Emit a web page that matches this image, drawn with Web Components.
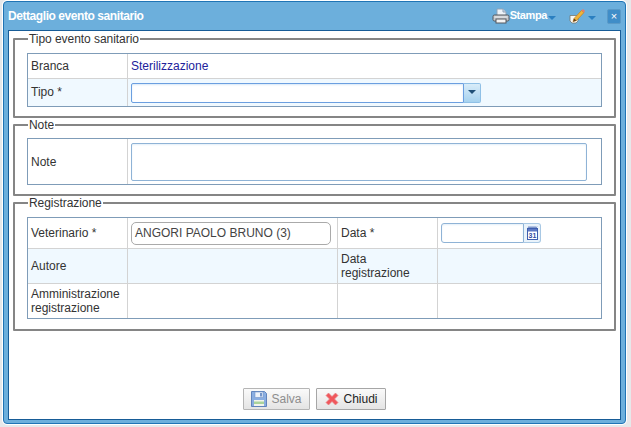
<!DOCTYPE html>
<html>
<head>
<meta charset="utf-8">
<title>Dettaglio evento sanitario</title>
<style>
html, body { margin: 0; padding: 0; height: 427px; overflow: hidden; }
body { background: #e6e8ea; font: 12px/14px "Liberation Sans", Arial, sans-serif; color: #333; }
</style>
</head>
<body>
<app-window heading="Dettaglio evento sanitario">
  <tool-button slot="tools" label="Stampa" icon="print"></tool-button>
  <tool-button slot="tools" icon="edit"></tool-button>

  <form-section legend="Tipo evento sanitario">
    <form-grid style="--cols: 100px 473px">
      <form-cell label style="height:24px">Branca</form-cell>
      <form-cell last-col style="height:24px"><span style="color:#22229c">Sterilizzazione</span></form-cell>
      <form-cell label alt last-row style="height:25px;padding-bottom:2px">Tipo *</form-cell>
      <form-cell alt last-col last-row style="height:27px"><combo-box></combo-box></form-cell>
    </form-grid>
  </form-section>

  <form-section legend="Note" style="--pt: 6px">
    <form-grid style="--cols: 100px 473px">
      <form-cell label last-row style="height:45px">Note</form-cell>
      <form-cell last-col last-row style="height:45px"><note-area></note-area></form-cell>
    </form-grid>
  </form-section>

  <form-section legend="Registrazione" style="--pb: 10px">
    <form-grid style="--cols: 100px 210px 100px 163px">
      <form-cell label style="height:30px">Veterinario *</form-cell>
      <form-cell style="height:30px"><text-box value="ANGORI PAOLO BRUNO (3)"></text-box></form-cell>
      <form-cell label style="height:30px">Data *</form-cell>
      <form-cell last-col style="height:30px"><date-box></date-box></form-cell>
      <form-cell label alt style="height:34px">Autore</form-cell>
      <form-cell alt style="height:34px"></form-cell>
      <form-cell label alt style="height:34px">Data<br>registrazione</form-cell>
      <form-cell alt last-col style="height:34px"></form-cell>
      <form-cell label last-row style="height:34px">Amministrazione<br>registrazione</form-cell>
      <form-cell last-row style="height:34px"></form-cell>
      <form-cell label last-row style="height:34px"></form-cell>
      <form-cell last-col last-row style="height:34px"></form-cell>
    </form-grid>
  </form-section>

  <action-button slot="footer" icon="save" disabled>Salva</action-button>
  <action-button slot="footer" icon="close">Chiudi</action-button>
</app-window>

<script>
const ICONS = {
  print: `<svg width="18" height="16" viewBox="0 0 18 16">
    <path d="M5 1h6l3 3v5H5z" fill="#eef3f8" stroke="#8fa3b8"/>
    <path d="M11 1v3h3" fill="#c9d8e6" stroke="#8fa3b8"/>
    <rect x="1" y="7" width="16" height="6" rx="1.5" fill="#c4c8cc" stroke="#54595e"/>
    <rect x="4" y="11" width="10" height="4" fill="#f5f5f5" stroke="#54595e"/>
    <rect x="2.500" y="8.500" width="13" height="1" fill="#eceeef"/>
  </svg>`,
  edit: `<svg width="16" height="16" viewBox="0 0 16 16">
    <path d="M1 7.500h8v5.500l-2 2h-4l-2-2z" fill="#f7f7f4" stroke="#77786f" stroke-width=".8"/>
    <path d="M5 10.500 12.500 2.500l2.500 2-7.500 8-3.500 1z" fill="#efb43a" stroke="#c47f1e" stroke-width=".7"/>
    <path d="M12.500 2.500 14 1l2 2-1 1.500z" fill="#e77b6c"/>
    <path d="M5 10.500l-.8 3.200 3.300-1.200z" fill="#63401b"/>
  </svg>`,
  save: `<svg width="16" height="16" viewBox="0 0 16 16">
    <path d="M.5.500h13l2 2v13H.5z" fill="#79a3df" stroke="#4a72b3"/>
    <rect x="4" y="1" width="8" height="5.500" fill="#eef3fb" stroke="#5f86c2" stroke-width=".6"/>
    <rect x="9" y="2" width="2" height="3.500" fill="#5f86c2"/>
    <rect x="3" y="9" width="10" height="6" fill="#f4f6ee"/>
    <rect x="3" y="10.500" width="10" height="2.500" fill="#9fcf8e"/>
  </svg>`,
  close: `<svg width="16" height="16" viewBox="0 0 16 16">
    <path d="M2 4.500 4.500 2 8 5.500 11.500 2 14 4.500 10.500 8 14 11.500 11.500 14 8 10.500 4.500 14 2 11.500 5.500 8z" fill="#f0575c" stroke="#e8888a" stroke-width=".7"/>
  </svg>`
};

class AppWindow extends HTMLElement {
  constructor() {
    super();
    this.attachShadow({ mode: 'open' }).innerHTML = `
<style>
:host {
  display: block;
  box-sizing: border-box;
  width: 623px;
  height: 423px;
  margin: 1px 0 0 3px;
  background: #6cafdc;
  border: 1px solid #1f74b5;
  border-radius: 4px;
  padding: 0 4px 4px 4px;
  box-shadow: 0 0 0 1px #fff;
}
.bar {
  height: 28px;
  display: flex;
  align-items: center;
  color: #fff;
}
.title {
  flex: 1;
  font-weight: bold;
  font-size: 12px;
  letter-spacing: -.43px;
}
.tools { display: flex; align-items: center; gap: 13px; }
.x {
  box-sizing: border-box;
  width: 14px;
  height: 15px;
  margin: 0 0 0 11px;
  background: #3f8dc8;
  border: 1px solid #5a9ac8;
  border-radius: 2px;
  color: #fff;
  font-size: 11px;
  line-height: 12px;
  text-align: center;
}
.body {
  box-sizing: border-box;
  height: 390px;
  background: #fff;
  border: 1px solid #175c97;
  padding: 1px 4px 0 4px;
  display: flex;
  flex-direction: column;
}
.content { flex: 1; display: flex; flex-direction: column; }
.footer { display: flex; justify-content: center; gap: 6px; padding: 0 0 9px 0; }
</style>
<div class="bar">
  <span class="title">${this.getAttribute('heading')}</span>
  <div class="tools"><slot name="tools"></slot></div>
  <span class="x">&#215;</span>
</div>
<div class="body">
  <div class="content"><slot></slot></div>
  <div class="footer"><slot name="footer"></slot></div>
</div>`;
  }
}

class ToolButton extends HTMLElement {
  constructor() {
    super();
    const label = this.getAttribute('label');
    this.attachShadow({ mode: 'open' }).innerHTML = `
<style>
:host { display: flex; align-items: center; color: #fff; font-weight: bold; font-size: 11px; letter-spacing: -.4px; }
svg { display: block; }
.caret { width: 0; height: 0; border: 4px solid transparent; border-top: 4px solid #2a7fc0; border-bottom: 0; margin: 4px 0 0 1px; }
.label { margin-top: -2px; }
:host([icon="edit"]) .caret { margin-left: 3px; }
</style>
${ICONS[this.getAttribute('icon')]}
${label ? `<span class="label">${label}</span>` : ''}
<span class="caret"></span>`;
  }
}

class FormSection extends HTMLElement {
  constructor() {
    super();
    this.attachShadow({ mode: 'open' }).innerHTML = `
<style>
:host { display: block; }
fieldset {
  margin: 0;
  padding: var(--pt, 7px) 12px var(--pb, 9px) 12px;
  border: 2px solid #858585;
  border-radius: 1px;
  min-width: 0;
}
legend { padding: 0 1px; margin-left: 1px; color: #333; line-height: 14px; letter-spacing: -.05px; }
</style>
<fieldset>
  <legend>${this.getAttribute('legend')}</legend>
  <slot></slot>
</fieldset>`;
  }
}

class FormGrid extends HTMLElement {
  constructor() {
    super();
    this.attachShadow({ mode: 'open' }).innerHTML = `
<style>
:host {
  display: grid;
  grid-template-columns: var(--cols);
  border: 1px solid #7f9cb8;
  width: fit-content;
}
</style>
<slot></slot>`;
  }
}

class FormCell extends HTMLElement {
  constructor() {
    super();
    this.attachShadow({ mode: 'open' }).innerHTML = `
<style>
:host {
  display: flex;
  align-items: center;
  padding: 0 3px;
  border-right: 1px solid #d3d3d3;
  border-bottom: 1px solid #d3d3d3;
  color: #333;
  min-width: 0;
}
:host([alt]) { background: #f0f9ff; }
:host([last-col]) { border-right: 0; }
:host([last-row]) { border-bottom: 0; }
</style>
<div><slot></slot></div>`;
  }
}

class ComboBox extends HTMLElement {
  constructor() {
    super();
    this.attachShadow({ mode: 'open' }).innerHTML = `
<style>
:host { display: flex; width: 350px; height: 20px; }
.input { flex: 1; background: #fff; border: 1px solid #6b9fe0; border-radius: 2px 0 0 2px; box-shadow: inset 0 1px 2px #d7e8f8; }
.btn {
  box-sizing: border-box;
  width: 17px;
  background: linear-gradient(#d8ecf9, #a6d2ef);
  border: 1px solid #8fc0e6;
  border-left: 0;
  border-radius: 0 2px 2px 0;
  display: flex;
  justify-content: center;
  padding-top: 6px;
}
.btn i { width: 0; height: 0; border: 4px solid transparent; border-top: 4px solid #1f4f77; border-bottom: 0; }
</style>
<div class="input"></div>
<div class="btn"><i></i></div>`;
  }
}

class NoteArea extends HTMLElement {
  constructor() {
    super();
    this.attachShadow({ mode: 'open' }).innerHTML = `
<style>
:host {
  display: block;
  box-sizing: border-box;
  width: 456px;
  height: 38px;
  background: #fff;
  border: 1px solid #8fb3d6;
  border-radius: 2px;
  box-shadow: inset 0 1px 2px #e3eff9;
}
</style>`;
  }
}

class TextBox extends HTMLElement {
  constructor() {
    super();
    this.attachShadow({ mode: 'open' }).innerHTML = `
<style>
:host {
  display: block;
  box-sizing: border-box;
  width: 200px;
  height: 23px;
  padding: 0 3px;
  border: 1px solid #aaa;
  border-radius: 5px;
  background: #fff;
  line-height: 21px;
  color: #444;
}
</style>
${this.getAttribute('value')}`;
  }
}

class DateBox extends HTMLElement {
  constructor() {
    super();
    this.attachShadow({ mode: 'open' }).innerHTML = `
<style>
:host { display: flex; width: 100px; height: 20px; }
.input { flex: 1; border: 1px solid #8fb3d6; border-radius: 3px 0 0 3px; background: #fff; box-shadow: inset 0 1px 2px #e3eff9; }
.btn {
  box-sizing: border-box;
  width: 17px;
  border: 1px solid #a8c8e4;
  border-left: 0;
  border-radius: 0 3px 3px 0;
  background: #e9f3fb;
  display: flex;
  align-items: center;
  justify-content: center;
}
svg { display: block; }
text { font: bold 7px "Liberation Sans", sans-serif; fill: #2d4ba0; }
</style>
<div class="input"></div>
<div class="btn"><svg width="11" height="14" viewBox="0 0 11 14">
  <rect x=".5" y="2.500" width="10" height="11" fill="#fff" stroke="#3f5fb0"/>
  <rect x="1" y="3" width="9" height="2.500" fill="#5d79c4"/>
  <path d="M1 2l1-1.500L3 2l1-1.500L5 2l1-1.500L7 2l1-1.500L9 2l1-1.500" fill="none" stroke="#3f5fb0" stroke-width=".7"/>
  <text x="5.500" y="12" text-anchor="middle">31</text>
</svg></div>`;
  }
}

class ActionButton extends HTMLElement {
  constructor() {
    super();
    this.attachShadow({ mode: 'open' }).innerHTML = `
<style>
:host {
  display: flex;
  align-items: center;
  box-sizing: border-box;
  height: 22px;
  padding: 0 7px;
  gap: 4px;
  border: 1px solid #a6a6a6;
  border-radius: 1px;
  background: linear-gradient(#fafafa, #e4e4e4);
  color: #222;
}
:host([disabled]) { color: #8d8d8d; border-color: #b5b5b5; }
svg { display: block; }
:host([disabled]) svg { opacity: .85; }
</style>
${ICONS[this.getAttribute('icon')]}
<slot></slot>`;
  }
}

customElements.define('app-window', AppWindow);
customElements.define('tool-button', ToolButton);
customElements.define('form-section', FormSection);
customElements.define('form-grid', FormGrid);
customElements.define('form-cell', FormCell);
customElements.define('combo-box', ComboBox);
customElements.define('note-area', NoteArea);
customElements.define('text-box', TextBox);
customElements.define('date-box', DateBox);
customElements.define('action-button', ActionButton);
</script>
</body>
</html>
